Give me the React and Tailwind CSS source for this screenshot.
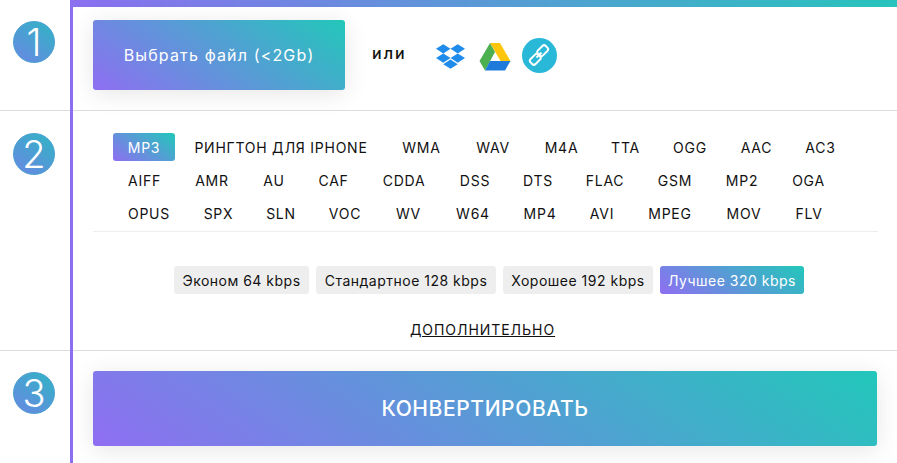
import React from 'react';
import { FaDropbox } from 'react-icons/fa';

const gradient = 'bg-[linear-gradient(35deg,#8f6ef2_0%,#22c7ba_100%)]';
const soft = 'shadow-[0_4px_24px_rgba(0,0,0,0.1)]';

const formats = [
  [
    ['MP3', 'w-[62px]'], ['РИНГТОН ДЛЯ IPHONE', 'w-[204px]'], ['WMA', 'w-[69px]'], ['WAV', 'w-[66px]'], ['M4A', 'w-[63px]'],
    ['TTA', 'w-[57px]'], ['OGG', 'w-[64px]'], ['AAC', 'w-[61px]'], ['AC3', 'w-[59px]'],
  ],
  [
    ['AIFF', 'w-[63px]'], ['AMR', 'w-[64px]'], ['AU', 'w-[52px]'], ['CAF', 'w-[59px]'], ['CDDA', 'w-[74px]'], ['DSS', 'w-[60px]'],
    ['DTS', 'w-[58px]'], ['FLAC', 'w-[68px]'], ['GSM', 'w-[64px]'], ['MP2', 'w-[62px]'], ['OGA', 'w-[63px]'],
  ],
  [
    ['OPUS', 'w-[72px]'], ['SPX', 'w-[59px]'], ['SLN', 'w-[58px]'], ['VOC', 'w-[62px]'], ['WV', 'w-[57px]'], ['W64', 'w-[64px]'],
    ['MP4', 'w-[62px]'], ['AVI', 'w-[54px]'], ['MPEG', 'w-[74px]'], ['MOV', 'w-[66px]'], ['FLV', 'w-[56px]'],
  ],
];

const qualities = [
  ['Эконом 64 kbps', 'w-[135px]'],
  ['Стандартное 128 kbps', 'w-[180px]'],
  ['Хорошее 192 kbps', 'w-[150px]'],
  ['Лучшее 320 kbps', 'w-[144px]'],
];

const StepNumber = ({ n }) => (
  <div className="w-[70px] flex justify-center shrink-0">
    <div className="w-[42px] h-[42px] mr-[2px] rounded-full bg-[linear-gradient(35deg,#6b86e4_0%,#2fb5c4_100%)] border border-[#4a9fd0] text-white text-[38px] font-light leading-none flex items-center justify-center">
      {n}
    </div>
  </div>
);

const DriveIcon = () => (
  <svg width="32" height="28" viewBox="0 0 32 28">
    <polygon points="11,0 21,0 31.5,18 21.5,18" fill="#fdc60d" />
    <polygon points="11,0 16,9 6,27.5 0.5,18" fill="#4caf50" />
    <polygon points="11,18 31.5,18 26,27.5 6,27.5" fill="#1e7bdc" />
  </svg>
);

const ChainIcon = () => (
  <svg width="24" height="24" viewBox="0 0 24 24" fill="none" stroke="white" strokeWidth="2">
    <rect x="12.2" y="2.2" width="7" height="11" rx="2.4" transform="rotate(45 15.7 7.7)" />
    <rect x="4.8" y="10.8" width="7" height="11" rx="2.4" transform="rotate(45 8.3 16.3)" />
    <path d="M9.5 14.5 L14.5 9.5" />
  </svg>
);

export default function App() {
  return (
    <div className="h-[463px] w-[897px] overflow-hidden bg-white text-[#111] font-['Inter','Liberation_Sans',sans-serif]">
      {/* шаг 1 */}
      <div className="flex h-[111px]">
        <div className="w-[70px] border-b border-[#ddd] pt-[21px]">
          <StepNumber n="1" />
        </div>
        <div className="w-[3px] bg-[#8b6ff0]" />
        <div className="flex-1 border-b border-[#ddd]">
          <div className="h-[7px] -ml-[3px] bg-[linear-gradient(90deg,#8b6ff0,#27c4bc)]" />
          <div className="flex items-center pl-[20px] pt-[13px]">
            <button className={`w-[252px] h-[70px] rounded-[3px] text-white text-[16px] tracking-[1.15px] ${gradient} ${soft}`}>
              Выбрать файл (&lt;2Gb)
            </button>
            <span className="ml-[27px] -mt-[4px] text-[16px] font-medium tracking-[2px]">или</span>
            <div className="flex items-center ml-[29px] mt-[3px]">
              <FaDropbox className="text-[#1f8ceb] text-[29px]" />
              <div className="ml-[14px]"><DriveIcon /></div>
              <div className="ml-[11px] -mt-[3px] w-[35px] h-[35px] rounded-full bg-[#29b8d8] flex items-center justify-center">
                <ChainIcon />
              </div>
            </div>
          </div>
        </div>
      </div>

      {/* шаг 2 */}
      <div className="flex h-[240px]">
        <div className="w-[70px] border-b border-[#ddd] pt-[22px]">
          <StepNumber n="2" />
        </div>
        <div className="w-[3px] bg-[#8b6ff0]" />
        <div className="flex-1 border-b border-[#ddd] pl-[20px] pr-[19px] pt-[22px]">
          <div className="ml-[20px] flex flex-col gap-[5px]">
            {formats.map((row, i) => (
              <div key={i} className="flex gap-[4px]">
                {row.map(([name, w]) => (
                  <div
                    key={name}
                    className={`h-[28px] shrink-0 rounded-[3px] flex items-center justify-center text-[14px] tracking-[0.75px] whitespace-nowrap ${w} ${name === 'MP3' ? `text-white ${gradient}` : ''}`}
                  >
                    {name}
                  </div>
                ))}
              </div>
            ))}
          </div>
          <div className="border-b border-[#eee] mt-[4px]" />
          <div className="flex gap-[7px] ml-[81px] mt-[34px]">
            {qualities.map(([name, w], i) => (
              <div
                key={name}
                className={`h-[28px] rounded-[3px] flex items-center justify-center text-[14px] tracking-[0.5px] whitespace-nowrap ${w} ${i === 3 ? `text-white ${gradient}` : 'bg-[#eee]'}`}
              >
                {name}
              </div>
            ))}
          </div>
          <div className="text-center mt-[25px] text-[14px] underline tracking-[0.95px] pr-[6px]">ДОПОЛНИТЕЛЬНО</div>
        </div>
      </div>

      {/* шаг 3 */}
      <div className="flex h-[112px]">
        <div className="w-[70px] pt-[21px]">
          <StepNumber n="3" />
        </div>
        <div className="w-[3px] bg-[#8b6ff0]" />
        <div className="flex-1 pl-[20px] pr-[20px] pt-[20px]">
          <button className={`w-full h-[75px] rounded-[3px] text-white text-[21px] font-medium tracking-[0.6px] ${gradient} ${soft}`}>
            КОНВЕРТИРОВАТЬ
          </button>
        </div>
      </div>
    </div>
  );
}
